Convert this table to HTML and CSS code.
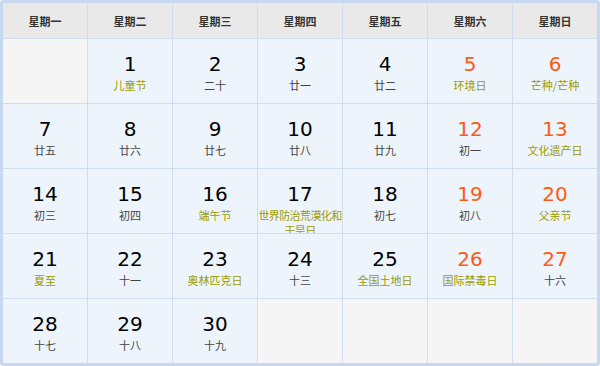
FILE: index.html
```
<!DOCTYPE html>
<html lang="zh">
<head>
<meta charset="utf-8">
<link rel="stylesheet" href="styles.css">
</head>
<body>
<div class="cal">
  <div class="head">星期一</div>
  <div class="head">星期二</div>
  <div class="head">星期三</div>
  <div class="head">星期四</div>
  <div class="head">星期五</div>
  <div class="head">星期六</div>
  <div class="head">星期日</div>

  <div class="cell empty"></div>
  <div class="cell"><div class="num">1</div><div class="sub fest">儿童节</div></div>
  <div class="cell"><div class="num">2</div><div class="sub">二十</div></div>
  <div class="cell"><div class="num">3</div><div class="sub">廿一</div></div>
  <div class="cell"><div class="num">4</div><div class="sub">廿二</div></div>
  <div class="cell"><div class="num wk">5</div><div class="sub fest">环境日</div></div>
  <div class="cell"><div class="num wk">6</div><div class="sub fest">芒种/芒种</div></div>

  <div class="cell"><div class="num">7</div><div class="sub">廿五</div></div>
  <div class="cell"><div class="num">8</div><div class="sub">廿六</div></div>
  <div class="cell"><div class="num">9</div><div class="sub">廿七</div></div>
  <div class="cell"><div class="num">10</div><div class="sub">廿八</div></div>
  <div class="cell"><div class="num">11</div><div class="sub">廿九</div></div>
  <div class="cell"><div class="num wk">12</div><div class="sub">初一</div></div>
  <div class="cell"><div class="num wk">13</div><div class="sub fest">文化遗产日</div></div>

  <div class="cell"><div class="num">14</div><div class="sub">初三</div></div>
  <div class="cell"><div class="num">15</div><div class="sub">初四</div></div>
  <div class="cell"><div class="num">16</div><div class="sub fest">端午节</div></div>
  <div class="cell"><div class="num">17</div><div class="sub fest long">世界防治荒漠化和干旱日</div></div>
  <div class="cell"><div class="num">18</div><div class="sub">初七</div></div>
  <div class="cell"><div class="num wk">19</div><div class="sub">初八</div></div>
  <div class="cell"><div class="num wk">20</div><div class="sub fest">父亲节</div></div>

  <div class="cell"><div class="num">21</div><div class="sub fest">夏至</div></div>
  <div class="cell"><div class="num">22</div><div class="sub">十一</div></div>
  <div class="cell"><div class="num">23</div><div class="sub fest">奥林匹克日</div></div>
  <div class="cell"><div class="num">24</div><div class="sub">十三</div></div>
  <div class="cell"><div class="num">25</div><div class="sub fest">全国土地日</div></div>
  <div class="cell"><div class="num wk">26</div><div class="sub fest">国际禁毒日</div></div>
  <div class="cell"><div class="num wk">27</div><div class="sub">十六</div></div>

  <div class="cell"><div class="num">28</div><div class="sub">十七</div></div>
  <div class="cell"><div class="num">29</div><div class="sub">十八</div></div>
  <div class="cell"><div class="num">30</div><div class="sub">十九</div></div>
  <div class="cell empty"></div>
  <div class="cell empty"></div>
  <div class="cell empty"></div>
  <div class="cell empty"></div>
</div>
</body>
</html>
```
FILE: styles.css
```
html, body {
  margin: 0;
  padding: 0;
  background: #ffffff;
}
.cal {
  width: 600px;
  height: 366px;
  box-sizing: border-box;
  border: 3px solid #c7d8f0;
  border-radius: 3px;
  background: #d0dcef;
  display: grid;
  grid-template-columns: 84px 84px 84px 84px 84px 84px 84px;
  grid-template-rows: 35px 64px 64px 64px 64px 64px;
  column-gap: 1px;
  row-gap: 1px;
  overflow: hidden;
}
.head {
  background: #e9e9ea;
  font-family: "Noto Sans CJK SC", sans-serif;
  font-weight: bold;
  font-size: 11px;
  color: #333333;
  display: flex;
  align-items: center;
  justify-content: center;
}
.cell {
  background: #edf4fb;
  text-align: center;
  overflow: hidden;
  padding-top: 13px;
  box-sizing: border-box;
}
.cell.empty {
  background: #f5f5f5;
}
.num {
  font-family: "DejaVu Sans", Verdana, sans-serif;
  font-size: 20px;
  line-height: 24px;
  color: #000000;
}
.num.wk {
  color: #ff5a14;
}
.sub {
  font-family: "Noto Sans CJK SC", sans-serif;
  font-size: 11px;
  line-height: 15px;
  margin-top: 2px;
  color: #444444;
  padding: 0 4px;
}
.sub.fest {
  color: #9b9b00;
}
.sub.long {
  padding: 0;
  letter-spacing: -0.6px;
}
```
